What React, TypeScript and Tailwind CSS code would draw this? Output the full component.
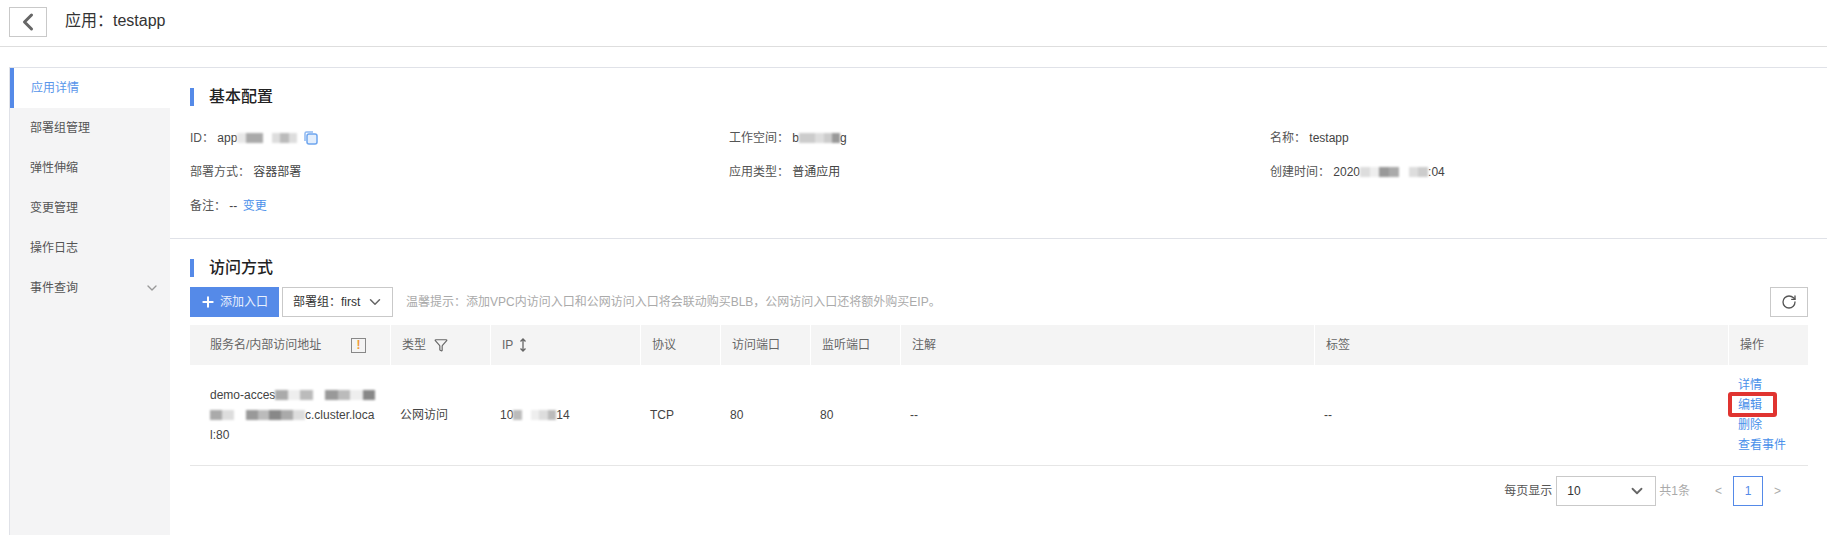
import { ChevronDown, ChevronLeft, Funnel, Plus, RotateCw } from "lucide-react";

const font = "font-['Liberation_Sans','Noto_Sans_CJK_SC',sans-serif]";

const sideItems = ["部署组管理", "弹性伸缩", "变更管理", "操作日志"];

// the reference has blurred-out values, so these are little grey patches
function Smudge({ shades, width }: { shades: string[]; width: number }) {
  return (
    <span
      className="inline-flex h-[10px] align-[-1px] blur-[1px]"
      style={{ width }}
    >
      {shades.map((c, i) => (
        <span key={i} className="flex-1" style={{ background: c }} />
      ))}
    </span>
  );
}

function SectionTitle({ children }: { children: string }) {
  return (
    <div className="flex h-[18px] items-center">
      <div className="h-[18px] w-[4px] bg-[#558ae8]" />
      <h2 className="ml-[15px] text-[16px] font-medium text-[#222]">{children}</h2>
    </div>
  );
}

function Info({ label, children, className }: { label: string; children: React.ReactNode; className?: string }) {
  return (
    <div className={`flex items-center whitespace-pre ${className ?? ""}`}>
      <span className="text-[#555]">{label}</span>
      {children}
    </div>
  );
}

function CopyIcon() {
  return (
    <svg width="14" height="14" viewBox="0 0 14 14" fill="none" className="ml-[7px]">
      <path d="M1 10V2.5C1 1.7 1.7 1 2.5 1H9" stroke="#8db8f2" strokeWidth="1.5" />
      <rect x="3" y="3" width="10" height="10" rx="2" fill="#e3eefc" stroke="#6ea5ee" strokeWidth="1.5" />
    </svg>
  );
}

const headCell = "flex h-[40px] items-center bg-[#f4f4f4] pl-[11px] text-[#666]";
const bodyCell = "flex items-center pl-[10px] text-[#444]";
const columns = "grid grid-cols-[200px_100px_150px_80px_90px_90px_414px_414px_80px] gap-0";

export default function App() {
  return (
    <div className={`${font} h-[535px] w-[1827px] overflow-hidden bg-white text-[12px] text-[#444]`}>
      <header className="flex h-[47px] items-start border-b border-[#dedede] pl-[9px] pt-[7px]">
        <button className="flex h-[30px] w-[38px] items-center justify-center border border-[#c9c9c9]">
          <ChevronLeft size={28} strokeWidth={2.6} className="text-[#666]" />
        </button>
        <div className="ml-[18px] mt-[3px] text-[16px] leading-[22px] text-[#333]">应用：testapp</div>
      </header>

      <div className="ml-[9px] mt-[20px] flex h-[468px] border-l border-t border-[#e0e2e8]">
        <aside className="w-[160px] shrink-0 bg-[#f4f4f5]">
          <div className="flex h-[40px] items-center border-l-[4px] border-[#558ae8] bg-white pl-[17px] text-[#5a96ea]">
            应用详情
          </div>
          {sideItems.map((t) => (
            <div key={t} className="flex h-[40px] items-center pl-[20px] text-[#555]">
              {t}
            </div>
          ))}
          <div className="flex h-[40px] items-center justify-between pl-[20px] pr-[10px] text-[#555]">
            事件查询
            <ChevronDown size={16} className="text-[#999]" />
          </div>
        </aside>

        <main className="min-w-0 flex-1">
          <section className="h-[171px] border-b border-[#e0e2e8] pl-[20px] pt-[20px]">
            <SectionTitle>基本配置</SectionTitle>
            <div className="mt-[22px] grid grid-cols-[539px_541px_1fr] gap-y-[14px] leading-[20px]">
              <Info label="ID：">
                <span> app</span>
                <Smudge width={60} shades={["#e8e8e8", "#aaa", "#aaa", "#fff", "#ddd", "#bbb", "#ddd"]} />
                <CopyIcon />
              </Info>
              <Info label="工作空间：">
                <span> b</span>
                <Smudge width={41} shades={["#ccc", "#ccc", "#ddd", "#ccc", "#999"]} />
                <span>g</span>
              </Info>
              <Info label="名称：">
                <span> testapp</span>
              </Info>
              <Info label="部署方式：">
                <span> 容器部署</span>
              </Info>
              <Info label="应用类型：">
                <span> 普通应用</span>
              </Info>
              <Info label="创建时间：">
                <span> 2020</span>
                <Smudge width={68} shades={["#ddd", "#eee", "#999", "#aaa", "#fff", "#ddd", "#ccc"]} />
                <span>:04</span>
              </Info>
              <Info label="备注：">
                <span> -- </span>
                <span className="ml-[2px] text-[#4a90ea]">变更</span>
              </Info>
            </div>
          </section>

          <section className="pl-[20px] pr-[19px] pt-[20px]">
            <SectionTitle>访问方式</SectionTitle>
            <div className="mt-[10px] flex h-[30px] items-center">
              <button className="flex h-[30px] w-[89px] items-center bg-[#558ae8] pl-[10px] text-[#e8f0fd]">
                <Plus size={16} strokeWidth={3} className="text-white" />
                <span className="ml-[4px]">添加入口</span>
              </button>
              <button className="ml-[3px] flex h-[30px] w-[111px] items-center border border-[#c9c9c9] pl-[10px] text-[#333]">
                部署组：first
                <ChevronDown size={18} className="ml-[6px] text-[#666]" />
              </button>
              <span className="ml-[13px] text-[#aaa]">
                温馨提示：添加VPC内访问入口和公网访问入口将会联动购买BLB，公网访问入口还将额外购买EIP。
              </span>
              <button className="ml-auto flex h-[30px] w-[38px] items-center justify-center border border-[#c9c9c9]">
                <RotateCw size={16} className="text-[#555]" />
              </button>
            </div>

            <div className={`${columns} mt-[8px]`}>
              <div className={`${headCell} justify-between pl-[20px] pr-[24px]`}>
                服务名/内部访问地址
                <span className="flex h-[15px] w-[15px] items-center justify-center border border-[#888] font-bold text-[#ee9a3a]">
                  !
                </span>
              </div>
              <div className={`${headCell} ml-[1px] pl-[10px]`}>
                类型
                <Funnel size={14} className="ml-[8px] text-[#666]" />
              </div>
              <div className={`${headCell} ml-[1px] pl-[10px]`}>
                IP
                <svg width="8" height="14" viewBox="0 0 8 14" className="ml-[6px]" fill="none" stroke="#666" strokeWidth="1.3">
                  <path d="M4 1v12M1.5 3.5L4 1l2.5 2.5M1.5 10.5L4 13l2.5-2.5" />
                </svg>
              </div>
              <div className={`${headCell} ml-[1px]`}>协议</div>
              <div className={`${headCell} ml-[1px]`}>访问端口</div>
              <div className={`${headCell} ml-[1px]`}>监听端口</div>
              <div className={`${headCell} ml-[1px]`}>注解</div>
              <div className={`${headCell} ml-[1px]`}>标签</div>
              <div className={`${headCell} ml-[1px]`}>操作</div>
            </div>

            <div className={`${columns} h-[101px] border-b border-[#e6e6e6] leading-[20px]`}>
              <div className="flex flex-col justify-center pl-[20px] text-[#444]">
                <div className="whitespace-pre">
                  demo-acces
                  <Smudge width={100} shades={["#aaa", "#eee", "#bbb", "#fff", "#999", "#bbb", "#eee", "#888"]} />
                </div>
                <div className="whitespace-pre">
                  <Smudge width={95} shades={["#aaa", "#ddd", "#fff", "#999", "#bbb", "#888", "#aaa", "#ddd"]} />
                  c.cluster.loca
                </div>
                <div>l:80</div>
              </div>
              <div className={bodyCell}>公网访问</div>
              <div className={`${bodyCell} whitespace-pre`}>
                10
                <Smudge width={43} shades={["#bbb", "#fff", "#eee", "#ddd", "#bbb"]} />
                14
              </div>
              <div className={bodyCell}>TCP</div>
              <div className={bodyCell}>80</div>
              <div className={bodyCell}>80</div>
              <div className={bodyCell}>--</div>
              <div className={bodyCell}>--</div>
              <div className="relative flex flex-col justify-center pl-[10px] text-[#4a90ea]">
                <span>详情</span>
                <span>编辑</span>
                <span>删除</span>
                <span>查看事件</span>
                <div className="absolute left-0 top-[27px] h-[25px] w-[49px] rounded-[3px] border-[4px] border-[#e03430]" />
              </div>
            </div>

            <div className="mt-[10px] flex h-[30px] items-center justify-end">
              <span className="text-[#555]">每页显示</span>
              <div className="ml-[4px] flex h-[30px] w-[100px] items-center justify-between border border-[#c9c9c9] pl-[10px] pr-[9px] text-[#333]">
                10
                <ChevronDown size={18} strokeWidth={2.4} className="text-[#666]" />
              </div>
              <span className="ml-[3px] text-[#aaa]">共1条</span>
              <span className="ml-[25px] text-[#aaa]">&lt;</span>
              <span className="ml-[11px] flex h-[30px] w-[30px] items-center justify-center border border-[#558ae8] text-[#558ae8]">
                1
              </span>
              <span className="ml-[11px] mr-[27px] text-[#aaa]">&gt;</span>
            </div>
          </section>
        </main>
      </div>
    </div>
  );
}
